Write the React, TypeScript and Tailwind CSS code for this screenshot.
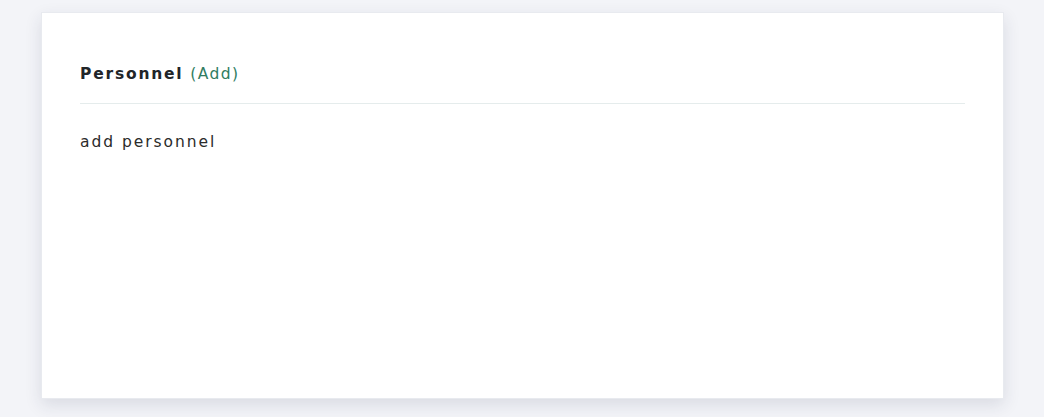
export default function App() {
  return (
    <div className="min-h-[417px] bg-[#f3f4f8] pl-[41px] pr-[40px] pt-3 pb-[18px] font-['DejaVu_Sans',sans-serif]">
      <div className="h-[387px] bg-white border border-[#e8eaef] shadow-[0_6px_16px_rgba(30,40,70,0.12)] px-[38px] pt-[50px]">
        <div className="pb-[18px] border-b border-[#e5ecec] text-[15.5px] leading-[22px] tracking-[1.8px] text-[#212529]">
          <span className="font-bold">Personnel</span>{" "}
          <span className="text-[#2f7d62] cursor-pointer tracking-[1.4px]">(Add)</span>
        </div>
        <p className="mt-[27px] text-[15.5px] leading-[22px] tracking-[1.95px] text-[#2b2b2b]">add personnel</p>
      </div>
    </div>
  );
}
